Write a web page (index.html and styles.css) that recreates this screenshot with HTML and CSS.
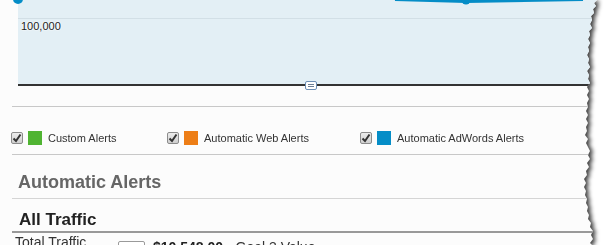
FILE: index.html
```html
<!DOCTYPE html>
<html lang="en">
<head>
  <meta charset="UTF-8">
  <title>Automatic Alerts</title>
  <link rel="stylesheet" href="styles.css">
</head>
<body>
  <div class="sheet">
    <div class="page">
      <div class="chart">
        <svg class="series" width="600" height="10" viewBox="0 0 600 10">
          <circle cx="0" cy="-1" r="5" fill="#058dc7"/>
          <path d="M377 -1 L448 1 L565 -1" stroke="#058dc7" stroke-width="4" fill="none"/>
          <circle cx="448" cy="0" r="4.5" fill="#058dc7"/>
        </svg>
        <div class="grid"></div>
        <span class="tick">100,000</span>
        <svg class="note" width="12" height="9" viewBox="0 0 12 9">
          <rect x="0.5" y="0.5" width="11" height="8" rx="1.5" fill="#fff" stroke="#6d8fb5"/>
          <line x1="3" y1="3.5" x2="9" y2="3.5" stroke="#6d7f95"/>
          <line x1="3" y1="5.5" x2="9" y2="5.5" stroke="#6d7f95"/>
        </svg>
      </div>

      <div class="panel">
        <div class="legend">
          <label class="legend-item">
            <span class="check"><svg width="10" height="10" viewBox="0 0 10 10"><path d="M1.5 5.5 L4 8 L8.5 1.5" stroke="#333" stroke-width="2" fill="none"/></svg></span>
            <span class="swatch green"></span>
            Custom Alerts
          </label>
          <label class="legend-item">
            <span class="check"><svg width="10" height="10" viewBox="0 0 10 10"><path d="M1.5 5.5 L4 8 L8.5 1.5" stroke="#333" stroke-width="2" fill="none"/></svg></span>
            <span class="swatch orange"></span>
            Automatic Web Alerts
          </label>
          <label class="legend-item">
            <span class="check"><svg width="10" height="10" viewBox="0 0 10 10"><path d="M1.5 5.5 L4 8 L8.5 1.5" stroke="#333" stroke-width="2" fill="none"/></svg></span>
            <span class="swatch blue"></span>
            Automatic AdWords Alerts
          </label>
        </div>

        <h2 class="section-title">Automatic Alerts</h2>
        <h3 class="segment">All Traffic</h3>

        <div class="row">
          <span class="row-label">Total Traffic</span>
          <span class="row-box"></span>
          <span class="row-value"><b>$10,548.00</b> - Goal 3 Value</span>
        </div>
      </div>
    </div>
  </div>
</body>
</html>
```

FILE: styles.css
```css
body {
  margin: 0;
  background: #fff;
  font-family: "Liberation Sans", Arial, sans-serif;
  color: #333;
  overflow: hidden;
}

.sheet {
  width: 600px;
  filter: drop-shadow(3px 1px 2px rgba(0, 0, 0, 0.75));
}

.page {
  height: 245px;
  overflow: hidden;
  background: #fcfcfc;
  clip-path: polygon(0 0, 597px 0, 594px 3px, 596px 6px, 593px 9px, 594px 13px, 591px 16px, 592px 20px, 590px 24px, 592px 28px, 589px 31px, 590px 35px, 588px 39px, 590px 43px, 588px 47px, 589px 51px, 587px 55px, 589px 59px, 588px 63px, 590px 67px, 587px 71px, 589px 75px, 588px 79px, 590px 83px, 587px 87px, 589px 91px, 587px 95px, 589px 99px, 587px 103px, 588px 107px, 586px 111px, 588px 115px, 586px 119px, 588px 123px, 586px 127px, 587px 131px, 585px 135px, 588px 139px, 586px 143px, 588px 147px, 590px 151px, 588px 155px, 590px 159px, 587px 163px, 589px 167px, 586px 171px, 587px 175px, 584px 179px, 586px 183px, 584px 187px, 586px 191px, 585px 195px, 587px 199px, 586px 203px, 588px 207px, 587px 211px, 589px 215px, 588px 219px, 591px 223px, 590px 227px, 593px 231px, 591px 235px, 593px 239px, 590px 243px, 592px 245px, 0 245px);
}

/* chart */
.chart {
  position: relative;
  margin-left: 18px;
  height: 84px;
  background: #e3eff5;
  border-bottom: 2px solid #333;
}

.series {
  position: absolute;
  left: 0;
  top: 0;
  overflow: visible;
}

.grid {
  height: 18px;
  border-bottom: 1px solid #d2dfe6;
}

.tick {
  display: block;
  margin-top: 1px;
  padding-left: 3px;
  font-size: 11px;
  line-height: 13px;
  color: #222;
  text-shadow: 0 0 2px #fff, 0 0 2px #fff;
}

.note {
  position: absolute;
  left: 287px;
  top: 81px;
}

/* panel */
.panel {
  padding-left: 12px;
}

.legend {
  display: grid;
  grid-template-columns: 156px 193px auto;
  margin-top: 20px;
  padding: 24px 0 9px;
  border-top: 1px solid #c8c8c8;
  border-bottom: 1px solid #c8c8c8;
}

.legend-item {
  display: flex;
  align-items: center;
  height: 14px;
  margin-left: -1px;
  font-size: 11px;
  color: #333;
}

.check {
  display: flex;
  align-items: center;
  justify-content: center;
  box-sizing: border-box;
  width: 12px;
  height: 12px;
  margin-right: 5px;
  border: 1px solid #8c8c8c;
  border-radius: 2px;
  background: linear-gradient(#ececec, #cfcfcf);
}

.swatch {
  width: 14px;
  height: 14px;
  margin-right: 6px;
}

.green { background: #50b432; }
.orange { background: #ed7e17; }
.blue { background: #058dc7; }

.section-title {
  margin: 0;
  padding: 16px 0 5px 6px;
  font-size: 18px;
  line-height: 22px;
  color: #666;
  border-bottom: 1px solid #d5d5d5;
}

.segment {
  margin: 0;
  padding: 11px 0 1px 7px;
  font-size: 17px;
  line-height: 20px;
  color: #222;
  border-bottom: 2px solid #999;
}

.row {
  display: flex;
  align-items: flex-start;
  padding: 1px 0 0 3px;
  font-size: 14px;
  line-height: 16px;
  color: #333;
}

.row-label {
  width: 103px;
}

.row-box {
  box-sizing: border-box;
  width: 27px;
  height: 14px;
  margin-top: 7px;
  border: 1px solid #9a9a9a;
  border-radius: 2px;
  background: #fff;
}

.row-value {
  margin: 5px 0 0 8px;
  white-space: nowrap;
}

.row-value b {
  color: #222;
}
```
